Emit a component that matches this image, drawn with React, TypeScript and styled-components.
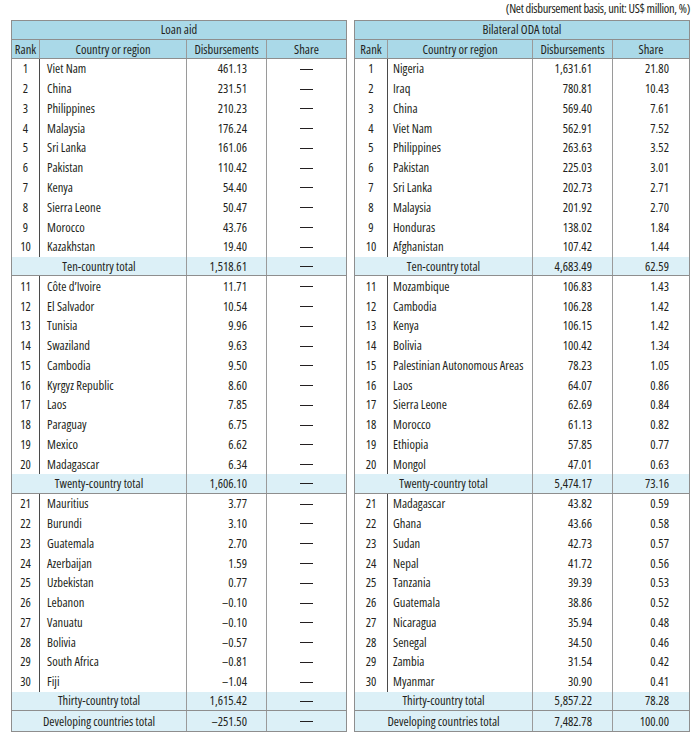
import React from "react";
import styled, { createGlobalStyle } from "styled-components";

const Global = createGlobalStyle`
  html, body { margin: 0; padding: 0; background: #ffffff; }
  body { font-family: "Open Sans", "Liberation Sans", sans-serif; font-stretch: 80%; color: #231f20; }
`;

type Row =
  | { kind: "data"; rank: number; name: string; disb: string; share?: string }
  | { kind: "total"; name: string; disb: string; share?: string };

const d = (rank: number, name: string, disb: string, share?: string): Row => ({ kind: "data", rank, name, disb, share });
const t = (name: string, disb: string, share?: string): Row => ({ kind: "total", name, disb, share });

const loanRows: Row[] = [
  d(1, "Viet Nam", "461.13"),
  d(2, "China", "231.51"),
  d(3, "Philippines", "210.23"),
  d(4, "Malaysia", "176.24"),
  d(5, "Sri Lanka", "161.06"),
  d(6, "Pakistan", "110.42"),
  d(7, "Kenya", "54.40"),
  d(8, "Sierra Leone", "50.47"),
  d(9, "Morocco", "43.76"),
  d(10, "Kazakhstan", "19.40"),
  t("Ten-country total", "1,518.61"),
  d(11, "Côte d’Ivoire", "11.71"),
  d(12, "El Salvador", "10.54"),
  d(13, "Tunisia", "9.96"),
  d(14, "Swaziland", "9.63"),
  d(15, "Cambodia", "9.50"),
  d(16, "Kyrgyz Republic", "8.60"),
  d(17, "Laos", "7.85"),
  d(18, "Paraguay", "6.75"),
  d(19, "Mexico", "6.62"),
  d(20, "Madagascar", "6.34"),
  t("Twenty-country total", "1,606.10"),
  d(21, "Mauritius", "3.77"),
  d(22, "Burundi", "3.10"),
  d(23, "Guatemala", "2.70"),
  d(24, "Azerbaijan", "1.59"),
  d(25, "Uzbekistan", "0.77"),
  d(26, "Lebanon", "–0.10"),
  d(27, "Vanuatu", "–0.10"),
  d(28, "Bolivia", "–0.57"),
  d(29, "South Africa", "–0.81"),
  d(30, "Fiji", "–1.04"),
  t("Thirty-country total", "1,615.42"),
  t("Developing countries total", "–251.50"),
];

const odaRows: Row[] = [
  d(1, "Nigeria", "1,631.61", "21.80"),
  d(2, "Iraq", "780.81", "10.43"),
  d(3, "China", "569.40", "7.61"),
  d(4, "Viet Nam", "562.91", "7.52"),
  d(5, "Philippines", "263.63", "3.52"),
  d(6, "Pakistan", "225.03", "3.01"),
  d(7, "Sri Lanka", "202.73", "2.71"),
  d(8, "Malaysia", "201.92", "2.70"),
  d(9, "Honduras", "138.02", "1.84"),
  d(10, "Afghanistan", "107.42", "1.44"),
  t("Ten-country total", "4,683.49", "62.59"),
  d(11, "Mozambique", "106.83", "1.43"),
  d(12, "Cambodia", "106.28", "1.42"),
  d(13, "Kenya", "106.15", "1.42"),
  d(14, "Bolivia", "100.42", "1.34"),
  d(15, "Palestinian Autonomous Areas", "78.23", "1.05"),
  d(16, "Laos", "64.07", "0.86"),
  d(17, "Sierra Leone", "62.69", "0.84"),
  d(18, "Morocco", "61.13", "0.82"),
  d(19, "Ethiopia", "57.85", "0.77"),
  d(20, "Mongol", "47.01", "0.63"),
  t("Twenty-country total", "5,474.17", "73.16"),
  d(21, "Madagascar", "43.82", "0.59"),
  d(22, "Ghana", "43.66", "0.58"),
  d(23, "Sudan", "42.73", "0.57"),
  d(24, "Nepal", "41.72", "0.56"),
  d(25, "Tanzania", "39.39", "0.53"),
  d(26, "Guatemala", "38.86", "0.52"),
  d(27, "Nicaragua", "35.94", "0.48"),
  d(28, "Senegal", "34.50", "0.46"),
  d(29, "Zambia", "31.54", "0.42"),
  d(30, "Myanmar", "30.90", "0.41"),
  t("Thirty-country total", "5,857.22", "78.28"),
  t("Developing countries total", "7,482.78", "100.00"),
];

const Page = styled.div`
  width: 700px;
  padding: 0 10px 0 11px;
  box-sizing: border-box;
  font-size: 12.5px;
`;

const Caption = styled.div`
  height: 20px;
  line-height: 17px;
  text-align: right;
  font-stretch: 75%;
  letter-spacing: -0.3px;
`;

const Tables = styled.div`
  display: flex;
  gap: 7px;
`;

const Table = styled.div`
  width: 336px;
  border: 1px solid #8e8e8e;
  box-sizing: border-box;
`;

const Title = styled.div`
  height: 19px;
  line-height: 18px;
  background: #aad9e8;
  border-bottom: 1px solid #8e8e8e;
  box-sizing: border-box;
  text-align: center;
`;

const Grid = styled.div<{ $cols: string; $tone?: "head" | "data" | "total"; $h: number; $last?: boolean }>`
  display: grid;
  grid-template-columns: ${(p) => p.$cols};
  height: ${(p) => p.$h}px;
  box-sizing: border-box;
  background: ${(p) => (p.$tone === "head" ? "#aad9e8" : p.$tone === "total" ? "#dcf0f7" : "#ffffff")};
  border-bottom: ${(p) => (p.$tone === "data" || p.$last ? "none" : "1px solid #8e8e8e")};
`;

const Cell = styled.div<{ $align?: "left" | "center" | "right"; $pad?: number; $line?: "dark" | "light" | "none"; $span?: number }>`
  display: flex;
  align-items: center;
  justify-content: ${(p) => (p.$align === "right" ? "flex-end" : p.$align === "center" ? "center" : "flex-start")};
  padding: ${(p) => (p.$align === "right" ? `0 ${p.$pad ?? 0}px 0 0` : p.$align === "left" ? `0 0 0 ${p.$pad ?? 0}px` : "0")};
  border-right: ${(p) => (p.$line === "dark" ? "1px solid #4a4a4a" : p.$line === "none" ? "none" : "1px solid #9a9a9a")};
  grid-column: ${(p) => (p.$span ? `span ${p.$span}` : "auto")};
  white-space: nowrap;
  overflow: hidden;
  box-sizing: border-box;
  height: 100%;
`;

const Dash = styled.span`
  display: inline-block;
  width: 13px;
  height: 1px;
  background: #231f20;
  margin-top: 1px;
`;

type Spec = { title: string; cols: string; disbPad: number; sharePad: number; namePad: number; rows: Row[] };

const ROW_H = 19.78;

function DataTable({ spec }: { spec: Spec }) {
  const shareCell = (share?: string) =>
    share ? (
      <Cell $align="right" $pad={spec.sharePad} $line="none">{share}</Cell>
    ) : (
      <Cell $align="center" $line="none"><Dash /></Cell>
    );
  return (
    <Table>
      <Title>{spec.title}</Title>
      <Grid $cols={spec.cols} $tone="head" $h={19}>
        <Cell $align="center">Rank</Cell>
        <Cell $align="center">Country or region</Cell>
        <Cell $align="center">Disbursements</Cell>
        <Cell $align="center" $line="none">Share</Cell>
      </Grid>
      {spec.rows.map((r, i) =>
        r.kind === "data" ? (
          <Grid key={i} $cols={spec.cols} $tone="data" $h={ROW_H}>
            <Cell $align="center" $line="dark">{r.rank}</Cell>
            <Cell $align="left" $pad={spec.namePad}>{r.name}</Cell>
            <Cell $align="right" $pad={spec.disbPad}>{r.disb}</Cell>
            {shareCell(r.share)}
          </Grid>
        ) : (
          <Grid key={i} $cols={spec.cols} $tone="total" $h={ROW_H} $last={i === spec.rows.length - 1}>
            <Cell $align="center" $span={2}>{r.name}</Cell>
            <Cell $align="right" $pad={spec.disbPad}>{r.disb}</Cell>
            {shareCell(r.share)}
          </Grid>
        )
      )}
    </Table>
  );
}

const loanSpec: Spec = {
  title: "Loan aid",
  cols: "28px 147px 80px 79px",
  disbPad: 19,
  sharePad: 20,
  namePad: 7,
  rows: loanRows,
};

const odaSpec: Spec = {
  title: "Bilateral ODA total",
  cols: "33px 145px 80px 76px",
  disbPad: 20,
  sharePad: 20,
  namePad: 5,
  rows: odaRows,
};

export default function App() {
  return (
    <Page>
      <Global />
      <Caption>(Net disbursement basis, unit: US$ million, %)</Caption>
      <Tables>
        <DataTable spec={loanSpec} />
        <DataTable spec={odaSpec} />
      </Tables>
    </Page>
  );
}
